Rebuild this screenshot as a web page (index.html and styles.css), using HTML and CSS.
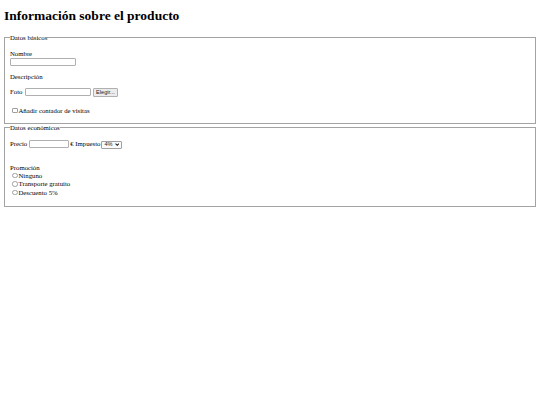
FILE: index.html
```html
<!DOCTYPE html>
<html lang="es">
<head>
<meta charset="utf-8">
<title>Información sobre el producto</title>
<link rel="stylesheet" href="styles.css">
</head>
<body>
<h1 class="title">Información sobre el producto</h1>
<form class="form">
  <fieldset class="group group-basic">
    <legend class="legend">Datos básicos</legend>
    <div class="field field-name">
      <label class="label" for="nombre">Nombre</label>
      <input class="text text-name" id="nombre" type="text">
    </div>
    <div class="field field-desc">Descripción</div>
    <div class="row row-foto">
      <span>Foto</span>
      <input class="text text-foto" type="text">
      <button class="btn" type="button">Elegir...</button>
    </div>
    <label class="row row-check"><input class="check" type="checkbox">Añadir contador de visitas</label>
  </fieldset>
  <fieldset class="group group-eco">
    <legend class="legend">Datos económicos</legend>
    <div class="row row-precio">
      <span>Precio</span>
      <input class="text text-precio" type="text">
      <span>€ Impuesto</span>
      <span class="select">
        <select class="sel"><option>4%</option><option>10%</option><option>21%</option></select>
        <svg class="chev" viewBox="0 0 8 5" width="4.5" height="3"><path d="M1 1 L4 4 L7 1" fill="none" stroke="#222" stroke-width="1.8"/></svg>
      </span>
    </div>
    <div class="promo">
      <div class="promo-title">Promoción</div>
      <label class="opt"><input class="radio" type="radio" name="promo">Ninguno</label>
      <label class="opt"><input class="radio" type="radio" name="promo">Transporte gratuito</label>
      <label class="opt"><input class="radio" type="radio" name="promo">Descuento 5%</label>
    </div>
  </fieldset>
</form>
</body>
</html>
```
FILE: styles.css
```css
body {
  margin: 0 4px;
  font-family: "Liberation Serif", "Times New Roman", serif;
  font-size: 6.75px;
  line-height: 8px;
  color: #000;
  background: #fff;
}
.title {
  font-size: 13.5px;
  line-height: 16px;
  font-weight: bold;
  margin: 7.5px 0 10px;
}
.form {
  margin: 0;
}
.group {
  margin: 0;
  border: 1px solid #a3a3a3;
  padding: 0 5px;
  min-width: 0;
}
.group-basic {
  padding-bottom: 8px;
}
.group-eco {
  padding-bottom: 9.5px;
}
.legend {
  padding: 0;
  line-height: 8px;
}
.field-name {
  margin-top: 8px;
}
.label {
  display: block;
}
.text {
  box-sizing: border-box;
  height: 8px;
  border: 1px solid #b0b0b0;
  border-radius: 1px;
  padding: 0 1px;
  margin: 0;
  background: #fff;
  font: 5.6px "Liberation Sans", Arial, sans-serif;
}
.text-name {
  display: block;
  width: 66px;
  margin-top: 0.5px;
}
.field-desc {
  margin-top: 6.5px;
}
.row {
  display: flex;
  align-items: center;
}
.row-foto {
  margin-top: 7.5px;
  height: 8.5px;
}
.text-foto {
  width: 66.5px;
  margin-left: 2.5px;
}
.btn {
  box-sizing: border-box;
  height: 8.5px;
  width: 25.5px;
  margin-left: 1.3px;
  padding: 0;
  border: 1px solid #b0b0b0;
  border-radius: 1px;
  background: #ececec;
  font: 5.6px/6px "Liberation Sans", Arial, sans-serif;
  color: #222;
}
.row-check {
  margin-top: 10px;
  align-items: flex-end;
  height: 8px;
}
.check {
  appearance: none;
  box-sizing: border-box;
  width: 5.5px;
  height: 5.5px;
  margin: 0 1px 1.3px 2px;
  border: 1px solid #a0a0a0;
  border-radius: 1px;
  background: #fff;
}
.row-precio {
  margin-top: 8.5px;
  height: 8px;
}
.text-precio {
  width: 40.5px;
  margin: 0 1px 0 1.5px;
}
.select {
  position: relative;
  display: inline-block;
  margin-left: 1px;
  height: 7.5px;
}
.sel {
  appearance: none;
  box-sizing: border-box;
  width: 21px;
  height: 7.5px;
  margin: 0;
  padding: 0 0 0 2px;
  border: 1px solid #a0a0a0;
  border-radius: 1px;
  background: #fafafa;
  font: 5.6px/5.5px "Liberation Sans", Arial, sans-serif;
  color: #222;
}
.chev {
  position: absolute;
  right: 3px;
  top: 2.3px;
}
.promo {
  margin-top: 15.5px;
}
.opt {
  display: flex;
  align-items: flex-end;
  height: 8.4px;
}
.radio {
  appearance: none;
  box-sizing: border-box;
  width: 5.5px;
  height: 5.5px;
  margin: 0 1px 1.5px 2px;
  border: 1px solid #a0a0a0;
  border-radius: 50%;
  background: #fff;
}
```
